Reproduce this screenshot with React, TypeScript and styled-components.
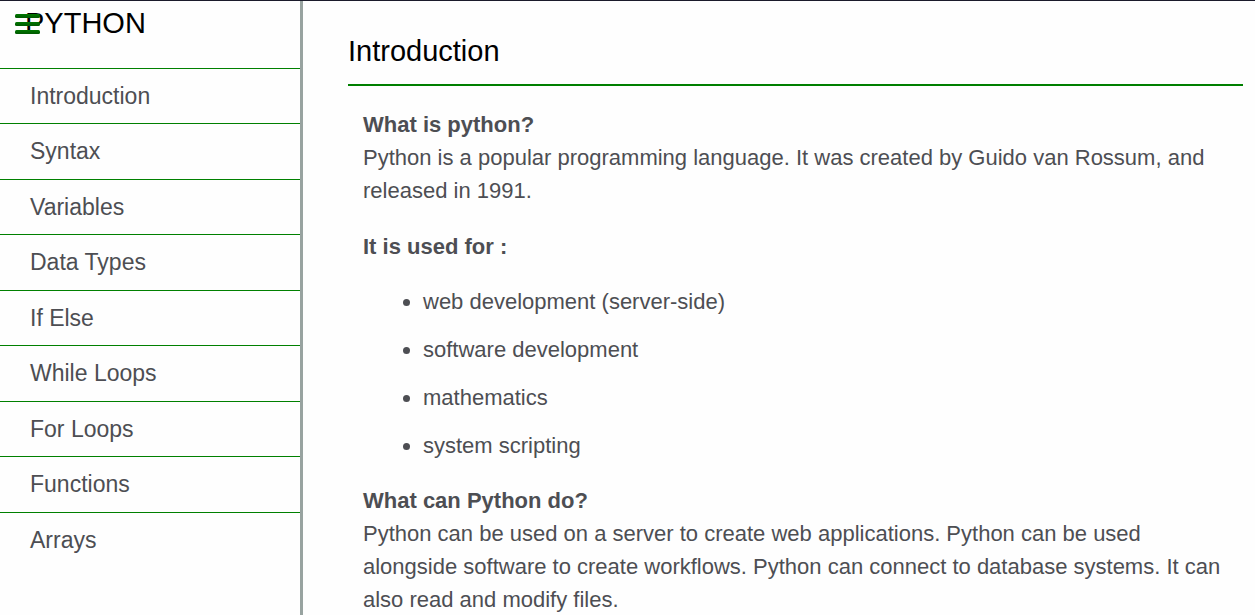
import React from "react";
import styled, { createGlobalStyle } from "styled-components";

const GlobalStyle = createGlobalStyle`
  *, *::before, *::after { box-sizing: border-box; }
  body {
    margin: 0;
    background: #fefefe;
    color: #4d4e53;
    font-family: "Liberation Sans", Arial, sans-serif;
    overflow: hidden;
  }
  h1, h2, h3, p, ul { margin: 0; padding: 0; font-weight: 400; }
`;

const Page = styled.div`
  display: flex;
  height: 100vh;
  border-top: 1px solid #1b1b2b;
  overflow: hidden;
`;

const Sidebar = styled.nav`
  position: relative;
  flex: 0 0 303px;
  border-right: 3px solid #98a3a0;
`;

const MenuButton = styled.button`
  position: absolute;
  top: 13px;
  left: 15px;
  width: 25px;
  padding: 0;
  border: 0;
  background: none;
  cursor: pointer;

  svg { display: block; }
`;

const SiteTitle = styled.h1`
  height: 67px;
  padding: 5px 0 0 25px;
  color: #000;
  font-size: 29px;
  line-height: 34px;
`;

const NavList = styled.ul`
  display: grid;
  grid-auto-rows: 1fr;
  min-height: 499px;
  list-style: none;
`;

const NavItem = styled.li`
  display: flex;
  border-top: 1px solid green;
`;

const NavLink = styled.a`
  flex: 1;
  padding: 10px 30px;
  color: inherit;
  font-size: 23px;
  line-height: 34px;
  text-decoration: none;
`;

const Main = styled.main`
  flex: 1;
  min-width: 0;
  padding: 33px 12px 0 45px;
`;

const SectionTitle = styled.h2`
  padding-bottom: 16px;
  border-bottom: 2px solid;
  border-image: linear-gradient(#005c00, #008000) 2;
  border-bottom-color: #006e00;
  color: #000;
  font-size: 29px;
  line-height: 34px;
`;

const Article = styled.div`
  padding: 22px 15px 0;
  font-size: 22px;
  line-height: 33px;
`;

const Subheading = styled.h3`
  font-size: 22px;
  font-weight: 700;
`;

const Paragraph = styled.p`
  margin-bottom: 23px;
`;

const UseList = styled.ul`
  margin: 22px 0;
  padding-left: 60px;
`;

const UseItem = styled.li`
  & + & { margin-top: 15px; }
`;

const topics = [
  "Introduction", "Syntax", "Variables", "Data Types", "If Else",
  "While Loops", "For Loops", "Functions", "Arrays",
];

const uses = [
  "web development (server-side)", "software development", "mathematics", "system scripting",
];

export default function App() {
  return (
    <>
      <GlobalStyle />
      <Page>
        <Sidebar>
          <SiteTitle>PYTHON</SiteTitle>
          <MenuButton type="button" aria-label="Menu">
            <svg width="25" height="20" viewBox="0 0 25 20">
              <defs>
                <linearGradient id="bar" x1="0" y1="0" x2="0" y2="1">
                  <stop offset="0" stopColor="#007800" />
                  <stop offset="1" stopColor="#005800" />
                </linearGradient>
              </defs>
              {[0, 8, 16].map((y) => (
                <rect key={y} y={y} width="25" height="4" rx="1.5" fill="url(#bar)" />
              ))}
            </svg>
          </MenuButton>
          <NavList>
            {topics.map((topic) => (
              <NavItem key={topic}>
                <NavLink href={`#${topic.replace(" ", "_")}`}>{topic}</NavLink>
              </NavItem>
            ))}
          </NavList>
        </Sidebar>
        <Main>
          <SectionTitle>Introduction</SectionTitle>
          <Article>
            <Subheading>What is python?</Subheading>
            <Paragraph>
              Python is a popular programming language. It was created by Guido van Rossum, and
              released in 1991.
            </Paragraph>
            <Subheading>It is used for :</Subheading>
            <UseList>
              {uses.map((use) => (
                <UseItem key={use}>{use}</UseItem>
              ))}
            </UseList>
            <Subheading>What can Python do?</Subheading>
            <Paragraph>
              Python can be used on a server to create web applications. Python can be used
              alongside software to create workflows. Python can connect to database systems. It can
              also read and modify files.
            </Paragraph>
          </Article>
        </Main>
      </Page>
    </>
  );
}
